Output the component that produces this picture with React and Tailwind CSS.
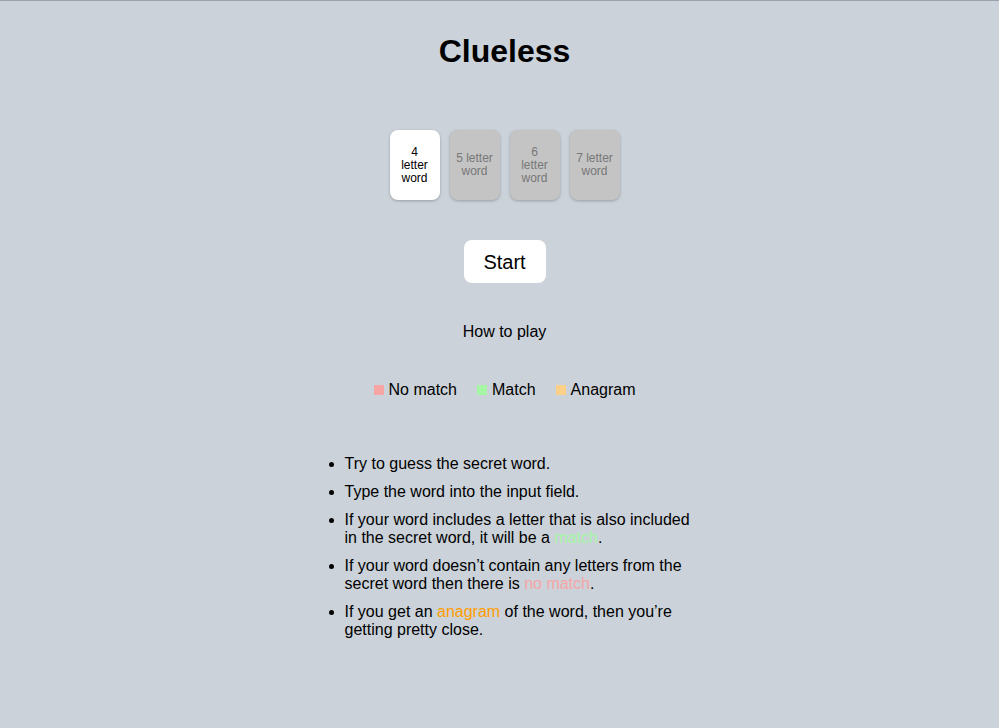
import { useState } from 'react';

const sizes = [
  { n: 4, lines: ['4', 'letter', 'word'] },
  { n: 5, lines: ['5 letter', 'word'] },
  { n: 6, lines: ['6', 'letter', 'word'] },
  { n: 7, lines: ['7 letter', 'word'] },
];

const App = () => {
  const [size, setSize] = useState(4);

  return (
    <div className="min-h-[728px] bg-[#cbd2d9] border-t border-[#9aa3ad] text-black font-['Liberation_Sans',Arial,sans-serif]">
      <div className="pl-[10px]">
        <h1 className="pt-[31px] text-center text-[32px] font-bold leading-[38px]">Clueless</h1>

        <div className="mt-[60px] flex justify-center gap-[10px]">
          {sizes.map((s) => (
            <button
              key={s.n}
              onClick={() => setSize(s.n)}
              className={`flex h-[70px] w-[50px] flex-col items-center justify-center rounded-[8px] text-center text-[12px] leading-[13px] shadow-[0_1px_3px_rgba(0,0,0,0.25)] ${size === s.n ? 'bg-white text-black' : 'bg-[#c4c4c4] text-[#777]'}`}
            >
              {s.lines.map((l) => (
                <span key={l} className="whitespace-nowrap">{l}</span>
              ))}
            </button>
          ))}
        </div>

        <div className="mt-[40px] flex justify-center">
          <button className="h-[43px] w-[82px] rounded-[8px] bg-white text-[20px]">Start</button>
        </div>

        <p className="mt-[39px] text-center text-[16px] leading-[20px]">How to play</p>

        <div className="mt-[38px] flex justify-center gap-[20px] text-[16px] leading-[20px]">
          <span className="flex items-center gap-[5px]"><span className="h-[10px] w-[10px] bg-[#f6a5a5]" />No match</span>
          <span className="flex items-center gap-[5px]"><span className="h-[10px] w-[10px] bg-[#a6f6a6]" />Match</span>
          <span className="flex items-center gap-[5px]"><span className="h-[10px] w-[10px] bg-[#fdd08a]" />Anagram</span>
        </div>
      </div>

      <ul className="mx-auto mt-[55px] w-[390px] list-disc space-y-[10px] pl-10 text-[16px] leading-[18px]">
        <li>Try to guess the secret word.</li>
        <li>Type the word into the input field.</li>
        <li>If your word includes a letter that is also included in the secret word, it will be a <span className="text-[#a6f6a6]">match</span>.</li>
        <li>If your word doesn’t contain any letters from the secret word then there is <span className="text-[#f6a5a5]">no match</span>.</li>
        <li>If you get an <span className="text-[#ff9d00]">anagram</span> of the word, then you’re getting pretty close.</li>
      </ul>
    </div>
  );
};

export default App;
